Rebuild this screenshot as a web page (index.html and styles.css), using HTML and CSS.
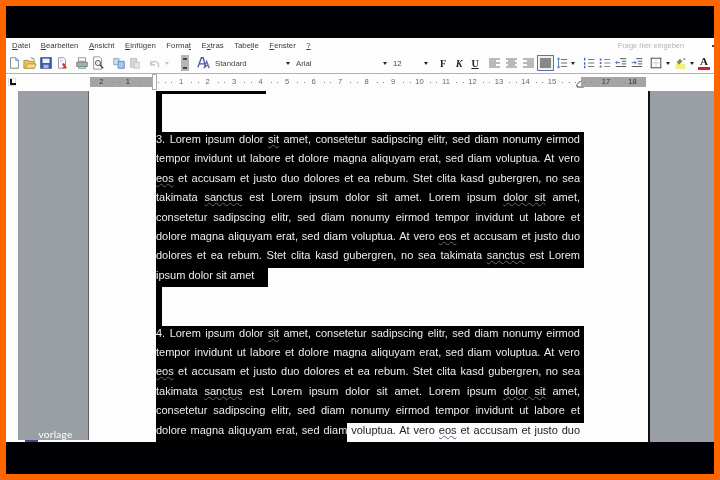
FILE: index.html
```html
<!DOCTYPE html>
<html lang="de">
<head>
<meta charset="utf-8">
<title>Vorlage</title>
<link rel="stylesheet" href="styles.css">
</head>
<body>
<div class="frame">
  <div class="band"></div>
  <div class="app">
    <div class="menubar">
      <nav class="menu">
        <span><u>D</u>atei</span><span><u>B</u>earbeiten</span><span><u>A</u>nsicht</span><span><u>E</u>infügen</span><span>Forma<u>t</u></span><span>E<u>x</u>tras</span><span>Tabe<u>l</u>le</span><span><u>F</u>enster</span><span><u>?</u></span>
      </nav>
      <div class="ask">Frage hier eingeben</div>
      <span class="askdd"></span>
    </div>
    <div class="toolbar">
      <svg class="ic" viewBox="0 0 16 16"><path d="M4 2h6l3 3v9H4z" fill="#fff" stroke="#6d7f9c"/><path d="M10 2v3h3" fill="none" stroke="#6d7f9c"/><path d="M5 14h8" stroke="#c8a84a"/></svg>
      <svg class="ic" viewBox="0 0 16 16"><path d="M1 5h5l1 1h6v8H1z" fill="#e8c25c" stroke="#a98a3a"/><path d="M3 14l2-5h10l-2 5z" fill="#f5dc8c" stroke="#b49642"/><path d="M9 2l3 1 1 2" fill="none" stroke="#4a7a3a"/></svg>
      <svg class="ic" viewBox="0 0 16 16"><rect x="2" y="2" width="12" height="12" fill="#3c5cb0" stroke="#2a3f80"/><rect x="4" y="3" width="8" height="5" fill="#eef2fa"/><rect x="5" y="10" width="6" height="4" fill="#a9b8d8"/></svg>
      <svg class="ic" viewBox="0 0 16 16"><path d="M4 2h6l2 2v10H4z" fill="#fff" stroke="#8a8fa0"/><path d="M9 8c2 0 3 2 3 3l2 3H8l2-2-2-2z" fill="#d23b2f"/><path d="M6 5h3M6 7h2" stroke="#b9bdc8"/></svg>
      <svg class="ic g4" viewBox="0 0 16 16"><path d="M4 2h8v4H4z" fill="#fff" stroke="#7e8a8a"/><path d="M2 7h12v5H2z" fill="#9fb0ae" stroke="#6e7e7c"/><path d="M4 12h8v2H4z" fill="#dfe6e4" stroke="#7e8a8a"/></svg>
      <svg class="ic" viewBox="0 0 16 16"><path d="M3 1h7l2 2v12H3z" fill="#fff" stroke="#8a8a8a"/><circle cx="8" cy="8" r="3" fill="#dfe8f4" stroke="#556"/><path d="M10 10l4 4" stroke="#445" stroke-width="1.5"/></svg>
      <svg class="ic g5" viewBox="0 0 16 16"><path d="M2 3h6v7H2z" fill="#cfe0f4" stroke="#7d9cc8"/><path d="M7 6h7v8H7z" fill="#a8c6ea" stroke="#5a82bc"/></svg>
      <svg class="ic" viewBox="0 0 16 16"><path d="M3 3h7v10H3z" fill="#d6d6d2" stroke="#bcbcb8"/><path d="M7 7h6v7H7z" fill="#e6e6e2" stroke="#c4c4c0"/></svg>
      <svg class="ic g4" viewBox="0 0 16 16"><path d="M3 5v5h5M3 10c2-5 7-5 9-1v4" fill="none" stroke="#c2c6cc" stroke-width="1.5"/></svg>
      <span class="dd w8 faint"></span>
      <span class="grip"><i></i><i></i></span>
      <svg class="ic g7" viewBox="0 0 16 16"><path d="M1 13L5 2h2l3 11M3 9h5" fill="none" stroke="#3d5aa8" stroke-width="1.5"/><path d="M8 14l3-8 3 8M9.5 11h3" fill="none" stroke="#7a5aa0" stroke-width="1.5"/></svg>
      <div class="combo c-style"><span>Standard</span><span class="dd"></span></div>
      <div class="combo c-font"><span>Arial</span><span class="dd"></span></div>
      <div class="combo c-size"><span>12</span><span class="dd"></span></div>
      <b class="fmt g5 serif">F</b><b class="fmt serif"><i>K</i></b><b class="fmt serif"><u>U</u></b>
      <svg class="al g3" viewBox="0 0 17 16"><path d="M3 4h11M3 6h7M3 8h11M3 10h7M3 12h11" stroke="#777" stroke-width="1.2"/></svg>
      <svg class="al" viewBox="0 0 17 16"><path d="M3 4h11M5 6h7M3 8h11M5 10h7M3 12h11" stroke="#777" stroke-width="1.2"/></svg>
      <svg class="al" viewBox="0 0 17 16"><path d="M3 4h11M7 6h7M3 8h11M7 10h7M3 12h11" stroke="#777" stroke-width="1.2"/></svg>
      <svg class="al on" viewBox="0 0 17 16"><path d="M3 4h11M3 6h11M3 8h11M3 10h11M3 12h11" stroke="#666" stroke-width="1.3"/></svg>
      <svg class="ic w14" viewBox="0 0 14 16"><path d="M6 4h7M6 8h7M6 12h7" stroke="#555"/><path d="M3 2v12" stroke="#3a66b0"/><path d="M1.5 4L3 2l1.500 2M1.500 12L3 14l1.500-2" fill="none" stroke="#3a66b0"/></svg>
      <span class="dd w8"></span>
      <svg class="ic g4" viewBox="0 0 16 16"><path d="M7 4h7M7 8h7M7 12h7" stroke="#666"/><path d="M3 2v3M3 7v3M3 11v3" stroke="#3a66b0" stroke-width="1.500"/></svg>
      <svg class="ic" viewBox="0 0 16 16"><path d="M7 4h7M7 8h7M7 12h7" stroke="#777"/><path d="M3 3v2M3 7v2M3 11v2" stroke="#3a66b0" stroke-width="2"/></svg>
      <svg class="ic" viewBox="0 0 16 16"><path d="M7 3h7M9 6h5M9 9h5M2 12h12" stroke="#444"/><path d="M7 7.500H2M4 5.500L2 7.500l2 2" fill="none" stroke="#3a66b0"/></svg>
      <svg class="ic" viewBox="0 0 16 16"><path d="M7 3h7M9 6h5M9 9h5M2 12h12" stroke="#444"/><path d="M2 7.500h5M5 5.500l2 2-2 2" fill="none" stroke="#3a66b0"/></svg>
      <svg class="ic g3" viewBox="0 0 16 16"><rect x="2.500" y="2.500" width="11" height="11" fill="none" stroke="#333"/><path d="M8 3v10M3 8h10" stroke="#ccc"/></svg>
      <span class="dd w8"></span>
      <svg class="ic" viewBox="0 0 16 16"><rect x="3" y="9" width="11" height="6" fill="#f4f080"/><path d="M4 7l4-4 3 3-4 4z" fill="#7c8f5a"/><path d="M12 3l2 1" stroke="#667" stroke-width="1.500"/></svg>
      <span class="dd w8"></span>
      <span class="color">A</span>
    </div>
    <div class="ruler">
      <div class="rl-side"><span class="tabstop"></span></div>
      <div class="rl-seg gray first"><span>2</span><span>1</span></div>
      <div class="rl-seg main">
        <span>1</span><span>2</span><span>3</span><span>4</span><span>5</span><span>6</span><span>7</span><span>8</span><span>9</span><span>10</span><span>11</span><span>12</span><span>13</span><span>14</span><span>15</span>
        <i class="m-left"></i>
        <svg class="m-right" viewBox="0 0 9 8"><path d="M4.500 1L8 4.500V7H1V4.500z" fill="#fff" stroke="#444"/></svg>
      </div>
      <div class="rl-seg gray last"><span>17</span><span>18</span></div>
    </div>
    <div class="doc">
      <div class="side-left">
        <div class="panel"><span class="vorlage">vorlage</span></div>
        <div class="foot"><i></i></div>
      </div>
      <main class="page">
        <div class="stub first"><i></i></div>
        <div class="ln sel">3. Lorem ipsum dolor <span class="sp">sit</span> amet, consetetur sadipscing elitr, sed diam nonumy eirmod</div>
        <div class="ln sel">tempor invidunt ut labore et dolore magna aliquyam erat, sed diam voluptua. At vero</div>
        <div class="ln sel"><span class="sp">eos</span> et accusam et justo duo dolores et ea rebum. Stet clita kasd gubergren, no sea</div>
        <div class="ln sel">takimata <span class="sp">sanctus</span> est Lorem ipsum dolor sit amet. Lorem ipsum <span class="sp">dolor sit</span> amet,</div>
        <div class="ln sel">consetetur sadipscing elitr, sed diam nonumy eirmod tempor invidunt ut labore et</div>
        <div class="ln sel">dolore magna aliquyam erat, sed diam voluptua. At vero <span class="sp">eos</span> et accusam et justo duo</div>
        <div class="ln sel">dolores et ea rebum. Stet clita kasd gubergren, no sea takimata <span class="sp">sanctus</span> est Lorem</div>
        <div class="ln sel end">ipsum dolor sit amet</div>
        <div class="stub"></div>
        <div class="ln sel">4. Lorem ipsum dolor <span class="sp">sit</span> amet, consetetur sadipscing elitr, sed diam nonumy eirmod</div>
        <div class="ln sel">tempor invidunt ut labore et dolore magna aliquyam erat, sed diam voluptua. At vero</div>
        <div class="ln sel"><span class="sp">eos</span> et accusam et justo duo dolores et ea rebum. Stet clita kasd gubergren, no sea</div>
        <div class="ln sel">takimata <span class="sp">sanctus</span> est Lorem ipsum dolor sit amet. Lorem ipsum <span class="sp">dolor sit</span> amet,</div>
        <div class="ln sel">consetetur sadipscing elitr, sed diam nonumy eirmod tempor invidunt ut labore et</div>
        <div class="ln part"><span class="hl">dolore magna aliquyam erat, sed diam</span> voluptua. At vero <span class="sp">eos</span> et accusam et justo duo</div>
      </main>
      <div class="side-right"></div>
    </div>
  </div>
  <div class="band"></div>
</div>
</body>
</html>
```

FILE: styles.css
```css
* { box-sizing: border-box; }
html, body { margin: 0; padding: 0; }
body { width: 720px; height: 480px; overflow: hidden; font-family: "Liberation Sans", Arial, sans-serif; }
.frame { width: 720px; height: 480px; border: 6px solid #ff6600; display: flex; flex-direction: column; background: #000; }
.band { height: 32px; background: #010004; flex: none; }
.app { height: 404px; background: #fdfdfd; display: flex; flex-direction: column; overflow: hidden; filter: blur(.25px); }

.menubar { height: 16px; display: flex; align-items: center; padding: 0 0 1px 6px; font-size: 7.8px; color: #3a3a3a; flex: none; }
.menu { display: flex; gap: 10.5px; }
.ask { margin-left: auto; margin-right: 28px; color: #b4b4b4; font-size: 7.4px; }
.askdd { width: 2px; height: 2px; background: #444; }

.toolbar { height: 18px; display: flex; align-items: center; flex: none; font-size: 7.8px; color: #444; }
.ic { width: 16px; height: 16px; flex: none; padding: 1px; }
.w14 { width: 14px; margin-left: 1px; padding: 1px; }
.g3 { margin-left: 3px; }
.g4 { margin-left: 4px; }
.g5 { margin-left: 5px; }
.g7 { margin-left: 7px; }
.dd { display: inline-block; width: 8px; height: 8px; flex: none; position: relative; }
.dd::after { content: ""; position: absolute; left: 2px; top: 3px; border: 2px solid transparent; border-top: 3px solid #222; border-bottom: 0; }
.w8 { width: 8px; }
.faint::after { border-top-color: #c4c4c4; }
.grip { width: 8px; height: 16px; margin-left: 10px; background: #b4b6ba; display: flex; flex-direction: column; justify-content: space-between; align-items: center; padding: 3px 0 2px; flex: none; }
.grip i { width: 4px; height: 2px; background: #444; }
.combo { display: flex; align-items: center; justify-content: space-between; flex: none; }
.c-style { width: 77px; margin-left: 3px; }
.c-font { width: 93px; margin-left: 4px; }
.c-size { width: 37px; margin-left: 4px; }
.fmt { width: 16px; text-align: center; flex: none; font-size: 10px; color: #222; }
.serif { font-family: "Liberation Serif", serif; }
.al { width: 17px; height: 16px; flex: none; }
.on { outline: 1px solid #5d76a0; outline-offset: -1px; background: #eef0f5; }
.color { width: 12px; height: 14px; margin: 0 2px; flex: none; text-align: center; font: bold 11px/11px "Liberation Serif", serif; color: #222; border-bottom: 3px solid #d0202a; }

.ruler { margin: 1px 0 1px; border-top: 1px solid #b4b4b4; height: 17px; display: flex; align-items: center; flex: none; font-size: 7.6px; color: #666; }
.rl-side { width: 84px; flex: none; display: flex; align-items: center; padding-left: 2px; }
.tabstop { width: 8px; height: 8px; background: #fff; border: 1px solid #ddd; position: relative; }
.tabstop::after { content: ""; position: absolute; left: 1px; top: 0; width: 4px; height: 4px; border-left: 2px solid #111; border-bottom: 2px solid #111; }
.rl-seg { --rb: #fdfdfd; display: flex; align-items: center; height: 10px; flex: none; position: relative;
  background: repeating-linear-gradient(90deg, #888 0 1px, transparent 1px 6.625px) 3px 50% / 100% 1px no-repeat; }
.rl-seg span { width: 26.5px; flex: none; text-align: center; line-height: 10px; background: linear-gradient(var(--rb), var(--rb)) center / 11px 100% no-repeat; }
.gray { --rb: #a5a5a8; background-color: #a5a5a8; color: #333; }
.first { width: 65px; }
.first span:first-child { margin-left: -2px; }
.main { width: 426px; padding-left: 12.75px; }
.last { width: 65px; padding-left: 11.75px; }
.m-left { position: absolute; left: -3px; top: -3px; width: 5px; height: 16px; background: #fff; border: 1px solid #aaa; }
.m-right { position: absolute; left: 421px; top: 3px; width: 9px; height: 8px; }

.doc { flex: 1; display: flex; min-height: 0; }
.side-left { width: 83px; flex: none; padding-left: 12px; display: flex; flex-direction: column; }
.panel { flex: 1; background: #9a9fa6; border-right: 1px solid #5f6266; display: flex; align-items: flex-end; justify-content: center; }
.vorlage { color: #fff; font: 10px/12px "Lato", sans-serif; margin-left: 5px; letter-spacing: .3px; }
.foot { height: 2px; }
.foot i { display: block; width: 13px; height: 2px; margin-left: 7px; background: #3c4a80; }
.page { width: 559px; flex: none; background: #fdfdfd; padding-left: 67px; overflow: hidden; font-size: 11px; color: #222; }
.ln { width: 428px; padding-right: 4px; line-height: 14px; padding-bottom: 5.4px; text-align: justify; text-align-last: justify; }
.sel { background: #000; color: #ececec; }
.end { width: 112px; text-align-last: left; }
.hl { background: #000; color: #ececec; padding: 2px 0 6px; }
.sp { text-decoration: underline wavy #6f6478 1px; text-underline-offset: 1px; }
.stub { height: 38.5px; border-left: 6px solid #000; }
.stub.first { height: 41px; }
.stub.first i { display: block; width: 104px; height: 3px; background: #000; }
.side-right { flex: 1; background: #9a9fa6; border-left: 2px solid #111; }
```
